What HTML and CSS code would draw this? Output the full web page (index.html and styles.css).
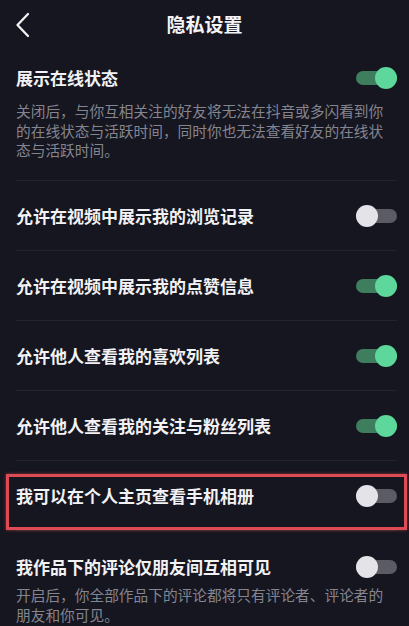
FILE: index.html
```html
<!DOCTYPE html>
<html lang="zh">
<head>
<meta charset="utf-8">
<link rel="stylesheet" href="styles.css">
</head>
<body>
<div class="page">
  <header class="topbar">
    <div class="back">
      <svg width="16" height="26" viewBox="0 0 16 26"><path d="M13 2 L2.5 13 L13 24" fill="none" stroke="#f2f2f2" stroke-width="2.3" stroke-linecap="round" stroke-linejoin="round"/></svg>
    </div>
    <h1 class="title">隐私设置</h1>
    <div class="spacer"></div>
  </header>
  <ul class="list">
    <li class="item first">
      <div class="line">
        <span class="label">展示在线状态</span>
        <span class="toggle on"><span class="knob"></span></span>
      </div>
      <p class="desc">关闭后，与你互相关注的好友将无法在抖音或多闪看到你的在线状态与活跃时间，同时你也无法查看好友的在线状态与活跃时间。</p>
    </li>
    <li class="item">
      <div class="line">
        <span class="label">允许在视频中展示我的浏览记录</span>
        <span class="toggle"><span class="knob"></span></span>
      </div>
    </li>
    <li class="item">
      <div class="line">
        <span class="label">允许在视频中展示我的点赞信息</span>
        <span class="toggle on"><span class="knob"></span></span>
      </div>
    </li>
    <li class="item">
      <div class="line">
        <span class="label">允许他人查看我的喜欢列表</span>
        <span class="toggle on"><span class="knob"></span></span>
      </div>
    </li>
    <li class="item">
      <div class="line">
        <span class="label">允许他人查看我的关注与粉丝列表</span>
        <span class="toggle on"><span class="knob"></span></span>
      </div>
    </li>
    <li class="item highlighted">
      <div class="line">
        <span class="label">我可以在个人主页查看手机相册</span>
        <span class="toggle"><span class="knob"></span></span>
      </div>
    </li>
    <li class="item last">
      <div class="line">
        <span class="label">我作品下的评论仅朋友间互相可见</span>
        <span class="toggle"><span class="knob"></span></span>
      </div>
      <p class="desc">开启后，你全部作品下的评论都将只有评论者、评论者的朋友和你可见。</p>
    </li>
  </ul>
</div>
</body>
</html>
```
FILE: styles.css
```css
* { box-sizing: border-box; }
html, body {
  margin: 0;
  padding: 0;
  background: #161620;
}
body {
  font-family: "Noto Sans CJK SC", "Noto Sans", sans-serif;
  color: #f0f0f2;
  width: 409px;
  height: 626px;
  overflow: hidden;
}
.page {
  display: flex;
  flex-direction: column;
}
.topbar {
  height: 48px;
  display: grid;
  grid-template-columns: 48px 1fr 48px;
  align-items: center;
}
.back {
  display: flex;
  align-items: center;
  padding-left: 15px;
  padding-top: 1px;
}
.title {
  margin: 0;
  text-align: center;
  font-size: 19px;
  font-weight: 700;
  line-height: 26px;
  color: #f4f4f6;
}
.list {
  list-style: none;
  margin: 0;
  padding: 0 12px 0 16px;
}
.item {
  border-bottom: 1px solid #23232e;
  height: 70px;
  display: flex;
  flex-direction: column;
  justify-content: center;
}
.item.first {
  height: 133px;
  justify-content: flex-start;
  padding-top: 18px;
}
.item.last {
  height: auto;
  border-bottom: none;
  justify-content: flex-start;
  padding-top: 24px;
}
.line {
  display: flex;
  align-items: center;
  justify-content: space-between;
  height: 24px;
}
.label {
  font-size: 17px;
  font-weight: 700;
  line-height: 24px;
  color: #f2f2f4;
}
.desc {
  margin: 11px 0 0;
  padding-right: 4px;
  font-size: 14.7px;
  line-height: 19.5px;
  color: #85858f;
}
.item.last .desc {
  margin-top: 6px;
}
.toggle {
  position: relative;
  width: 41px;
  height: 22px;
  display: flex;
  align-items: center;
  flex: none;
}
.toggle::before {
  content: "";
  width: 41px;
  height: 14px;
  border-radius: 7px;
  background: #5b5b66;
}
.toggle.on::before {
  background: #3f7d5f;
}
.knob {
  position: absolute;
  top: 0;
  left: 0;
  width: 22px;
  height: 22px;
  border-radius: 50%;
  background: #e3e3e8;
}
.toggle.on .knob {
  left: auto;
  right: 0;
  background: #5dd79b;
}
.highlighted {
  position: relative;
}
.highlighted::after {
  content: "";
  position: absolute;
  left: -10px;
  right: -10px;
  top: 13px;
  bottom: 0;
  border: 3px solid #df4b55;
  box-shadow: 0 0 3px rgba(223, 75, 85, 0.6);
  pointer-events: none;
}
```
